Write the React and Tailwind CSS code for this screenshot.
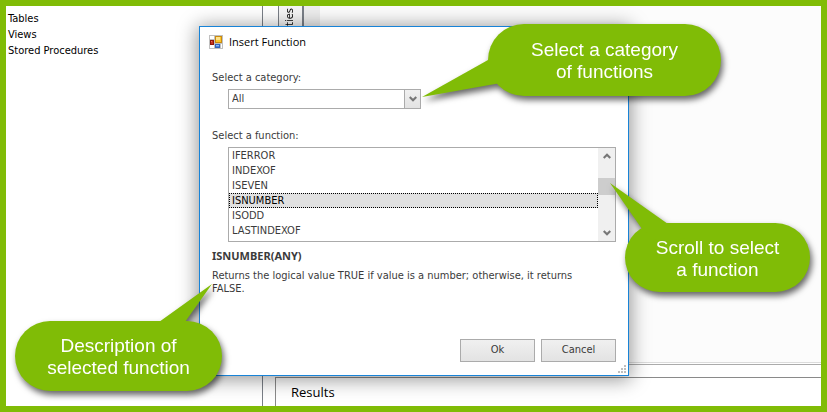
import { useState } from "react";

const functions = [
  { name: "IFERROR" },
  { name: "INDEXOF" },
  { name: "ISEVEN" },
  {
    name: "ISNUMBER",
    signature: "ISNUMBER(ANY)",
    description: "Returns the logical value TRUE if value is a number; otherwise, it returns FALSE.",
  },
  { name: "ISODD" },
  { name: "LASTINDEXOF" },
];

const treeItems = ["Tables", "Views", "Stored Procedures"];

function Chevron({ up, className }) {
  return (
    <svg viewBox="0 0 8 6" className={`w-2 h-1.5 ${className || ""}`} aria-hidden="true">
      <path
        d={up ? "M0.7 5 L4 1.7 L7.3 5" : "M0.7 1 L4 4.3 L7.3 1"}
        fill="none"
        stroke="#777777"
        strokeWidth="2.2"
      />
    </svg>
  );
}

function FormIcon() {
  return (
    <svg viewBox="0 0 14 14" className="w-3.5 h-3.5" aria-hidden="true">
      <rect width="14" height="14" fill="#c0c0c0" />
      <path d="M1 1h4v3H1zM1 10h4v3H1zM12 9h1v4h-1z" fill="#ffffff" />
      <rect x="1.5" y="5.5" width="3" height="4" fill="#c8321e" stroke="#8e1508" />
      <rect x="2" y="6" width="1" height="1" fill="#e8705c" />
      <rect x="6.5" y="1.5" width="6" height="6" fill="#fbc629" stroke="#c98a10" />
      <rect x="7" y="2" width="4" height="3" fill="#ffe38a" />
      <rect x="6.5" y="9.5" width="4" height="3" fill="#4f86e0" stroke="#3263b8" />
      <rect x="7" y="10" width="3" height="1" fill="#8db6f5" />
    </svg>
  );
}

function SizeGrip() {
  return (
    <svg viewBox="0 0 8 8" className="absolute right-0.5 bottom-0.5 w-2 h-2" aria-hidden="true">
      <path d="M6 0h2v2h-2zM3 3h2v2h-2zM6 3h2v2h-2zM0 6h2v2h-2zM3 6h2v2h-2zM6 6h2v2h-2z" fill="#bfbfbf" />
    </svg>
  );
}

function Callout({ className, tailClass, tailBox, tail, children }) {
  return (
    <div
      className={`absolute flex items-center justify-center rounded-full bg-[#80bc06] pt-0.5 text-center text-white text-[19px] leading-[22px] font-['Liberation_Sans',Arial,sans-serif] drop-shadow-[2px_4px_3px_rgba(0,0,0,0.6)] ${className}`}
    >
      <svg viewBox={tailBox} className={`absolute ${tailClass}`} aria-hidden="true">
        <polygon points={tail} fill="#80bc06" />
      </svg>
      <p className="relative">{children}</p>
    </div>
  );
}

function InsertFunctionDialog() {
  const [selected, setSelected] = useState("ISNUMBER");
  const current = functions.find((fn) => fn.name === selected);

  return (
    <section
      role="dialog"
      aria-labelledby="dialog-title"
      className="absolute left-[193px] top-5 w-[430px] border border-[#1883d7] bg-white px-3 pt-2 pb-[13px] shadow-[0_2px_18px_2px_rgba(0,0,0,0.4)]"
    >
      <header className="flex items-center gap-1.5 -ml-[3px] h-[14px]">
        <FormIcon />
        <h1 id="dialog-title" className="text-[11px] text-black font-['Open_Sans',sans-serif]">
          Insert Function
        </h1>
      </header>

      <label htmlFor="category" className="block mt-[22px] leading-[14px]">
        Select a category:
      </label>
      <div className="relative ml-4 mt-1 w-[193px]">
        <select
          id="category"
          className="block w-full h-5 appearance-none border border-[#ababab] bg-white pl-[3px] pr-5 outline-none"
        >
          <option>All</option>
        </select>
        <span className="pointer-events-none absolute inset-y-0 right-0 w-[17px] flex items-center justify-center border border-[#ababab] bg-linear-to-b from-[#f0f0f0] to-[#e3e3e3]">
          <Chevron />
        </span>
      </div>

      <p id="function-label" className="mt-5 leading-[14px]">
        Select a function:
      </p>
      <div className="ml-4 mt-1 flex border border-[#ababab]">
        <ul role="listbox" aria-labelledby="function-label" className="flex-1 pb-[3px]">
          {functions.map((fn) => (
            <li
              key={fn.name}
              role="option"
              aria-selected={fn.name === selected}
              onClick={() => setSelected(fn.name)}
              className={`h-[15px] leading-[15px] outline-1 -outline-offset-1 outline-dotted pl-[3px] ${
                fn.name === selected ? "outline-black bg-[#e1e1e1] text-black" : "outline-transparent"
              }`}
            >
              {fn.name}
            </li>
          ))}
        </ul>
        <div className="w-[17px] flex flex-col items-center bg-[#f0f0f0] py-[5px]">
          <Chevron up />
          <div className="w-full h-[17px] bg-[#cdcdcd] mt-[19px]" />
          <Chevron className="mt-auto" />
        </div>
      </div>

      <h2 className="mt-[7px] leading-[14px] font-bold font-['Noto_Sans',sans-serif]">{current.signature}</h2>
      <p className="mt-[6px] leading-[13px] h-[26px] w-[370px]">{current.description}</p>

      <footer className="mt-11 flex justify-end gap-1.5">
        <button
          type="button"
          className="w-[75px] h-[23px] border border-[#ababab] bg-linear-to-b from-[#f0f0f0] to-[#e3e3e3]"
        >
          Ok
        </button>
        <button
          type="button"
          className="w-[75px] h-[23px] border border-[#ababab] bg-linear-to-b from-[#f0f0f0] to-[#e3e3e3]"
        >
          Cancel
        </button>
      </footer>
      <SizeGrip />
    </section>
  );
}

export default function App() {
  return (
    <main className="relative min-h-screen flex overflow-hidden border-[6px] border-[#80bc06] bg-white text-[11px] text-[#3b3b3b] font-['DejaVu_Sans_Condensed','Noto_Sans',sans-serif]">
      {/* Object tree, scrolled part way down */}
      <nav className="w-[257px] shrink-0 border-r border-[#7a7f87] pl-0.5 pt-[5px] text-black">
        <ul>
          {treeItems.map((item) => (
            <li key={item} className="leading-4">
              {item}
            </li>
          ))}
        </ul>
      </nav>

      <div className="flex-1 flex flex-col">
        <div className="flex-1 flex bg-[#fcfcfc]">
          <div className="w-[41px] flex justify-end bg-white">
            <div className="w-[26px] border-l border-[#7a7f87] border-r-2 bg-[#f5f5f5] text-black">
              <span className="block [writing-mode:vertical-rl] rotate-180 mt-0.5 leading-[22px]">ties</span>
            </div>
          </div>
          <div className="w-4 bg-[#eeeeee]" />
        </div>
        <div className="h-0.5 ml-3 border-t border-[#dcdcdc]" />
        <div className="h-[13px] ml-3 border-t border-[#ababab] bg-white" />
        <section className="h-[29px] ml-3 border-t border-l border-[#8a8a8a] bg-white pl-[15px] pt-[5px]">
          <h2 className="text-[13px] leading-[18px] text-black font-['Open_Sans',sans-serif]">Results</h2>
        </section>
      </div>

      <InsertFunctionDialog />

      <Callout
        className="left-[482px] top-[18px] w-[233px] h-[72px]"
        tailClass="-left-[66px] top-0 w-[90px] h-[76px]"
        tailBox="0 0 90 76"
        tail="0,73 66,36 90,24 90,57"
      >
        Select a category
        <br />
        of functions
      </Callout>
      <Callout
        className="left-[619px] top-[217px] w-[185px] h-[69px]"
        tailClass="-left-[15px] -top-10 w-[80px] h-[60px]"
        tailBox="0 0 80 60"
        tail="0,0 58,41 75,55 50,60 32,46"
      >
        Scroll to select
        <br />a function
      </Callout>
      <Callout
        className="left-[9px] top-[315px] w-[207px] h-[70px]"
        tailClass="left-[130px] -top-[37px] w-[70px] h-[50px]"
        tailBox="0 0 70 50"
        tail="67,0 14,38 14,48 38,48 40,38"
      >
        Description of
        <br />
        selected function
      </Callout>
    </main>
  );
}
